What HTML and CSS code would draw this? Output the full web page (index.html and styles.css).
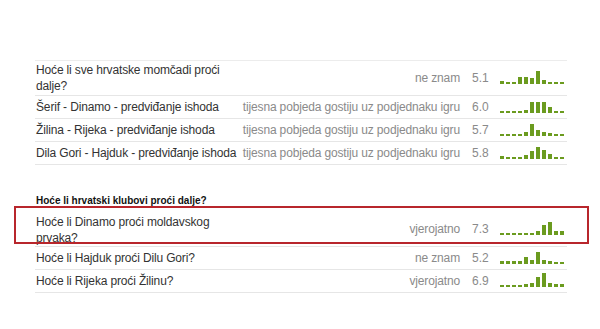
FILE: index.html
```html
<!DOCTYPE html>
<html lang="hr">
<head>
<meta charset="utf-8">
<title>Ankete</title>
<link rel="stylesheet" href="styles.css">
</head>
<body>
<div class="page">
  <div class="poll-list first">
    <div class="row">
      <div class="title">Hoće li sve hrvatske momčadi proći dalje?</div>
      <div class="desc">ne znam</div>
      <div class="score">5.1</div>
      <div class="spark"><i style="height:3px"></i><i style="height:2px"></i><i style="height:2px"></i><i style="height:7px"></i><i style="height:7px"></i><i style="height:6px"></i><i style="height:13px"></i><i style="height:4px"></i><i style="height:2px"></i><i style="height:2px"></i><i style="height:2px"></i></div>
    </div>
    <div class="row">
      <div class="title">Šerif - Dinamo - predviđanje ishoda</div>
      <div class="desc">tijesna pobjeda gostiju uz podjednaku igru</div>
      <div class="score">6.0</div>
      <div class="spark"><i style="height:2px"></i><i style="height:2px"></i><i style="height:2px"></i><i style="height:2px"></i><i style="height:3px"></i><i style="height:11px"></i><i style="height:11px"></i><i style="height:11px"></i><i style="height:6px"></i><i style="height:2px"></i><i style="height:2px"></i></div>
    </div>
    <div class="row">
      <div class="title">Žilina - Rijeka - predviđanje ishoda</div>
      <div class="desc">tijesna pobjeda gostiju uz podjednaku igru</div>
      <div class="score">5.7</div>
      <div class="spark"><i style="height:2px"></i><i style="height:2px"></i><i style="height:2px"></i><i style="height:2px"></i><i style="height:4px"></i><i style="height:12px"></i><i style="height:6px"></i><i style="height:4px"></i><i style="height:3px"></i><i style="height:2px"></i><i style="height:2px"></i></div>
    </div>
    <div class="row">
      <div class="title">Dila Gori - Hajduk - predviđanje ishoda</div>
      <div class="desc">tijesna pobjeda gostiju uz podjednaku igru</div>
      <div class="score">5.8</div>
      <div class="spark"><i style="height:3px"></i><i style="height:2px"></i><i style="height:2px"></i><i style="height:2px"></i><i style="height:4px"></i><i style="height:8px"></i><i style="height:12px"></i><i style="height:9px"></i><i style="height:5px"></i><i style="height:2px"></i><i style="height:2px"></i></div>
    </div>
  </div>

  <h3 class="group-title">Hoće li hrvatski klubovi proći dalje?</h3>

  <div class="poll-list">
    <div class="row highlighted">
      <div class="title">Hoće li Dinamo proći moldavskog prvaka?</div>
      <div class="desc">vjerojatno</div>
      <div class="score">7.3</div>
      <div class="spark"><i style="height:2px"></i><i style="height:2px"></i><i style="height:2px"></i><i style="height:2px"></i><i style="height:2px"></i><i style="height:2px"></i><i style="height:4px"></i><i style="height:10px"></i><i style="height:13px"></i><i style="height:4px"></i><i style="height:4px"></i></div>
    </div>
    <div class="row">
      <div class="title">Hoće li Hajduk proći Dilu Gori?</div>
      <div class="desc">ne znam</div>
      <div class="score">5.2</div>
      <div class="spark"><i style="height:3px"></i><i style="height:3px"></i><i style="height:3px"></i><i style="height:3px"></i><i style="height:7px"></i><i style="height:4px"></i><i style="height:12px"></i><i style="height:4px"></i><i style="height:3px"></i><i style="height:2px"></i><i style="height:2px"></i></div>
    </div>
    <div class="row">
      <div class="title">Hoće li Rijeka proći Žilinu?</div>
      <div class="desc">vjerojatno</div>
      <div class="score">6.9</div>
      <div class="spark"><i style="height:2px"></i><i style="height:2px"></i><i style="height:2px"></i><i style="height:2px"></i><i style="height:3px"></i><i style="height:4px"></i><i style="height:10px"></i><i style="height:14px"></i><i style="height:4px"></i><i style="height:3px"></i><i style="height:3px"></i></div>
    </div>
  </div>
</div>
</body>
</html>
```

FILE: styles.css
```css
html, body {
  margin: 0;
  padding: 0;
  background: #ffffff;
}

body {
  font-family: "Liberation Sans", Arial, sans-serif;
  font-size: 12px;
  color: #3a3a3a;
}

.page {
  width: 532px;
  padding: 60px 0 0 35px;
}

.poll-list.first {
  border-top: 1px solid #ececec;
}

.row {
  display: flex;
  align-items: center;
  min-height: 22px;
  border-bottom: 1px solid #e6e6e6;
  position: relative;
}

.title {
  width: 205px;
  flex: none;
  padding: 1px 0 1px 1px;
  line-height: 16px;
  letter-spacing: -0.15px;
  color: #333;
}

.highlighted .title {
  padding: 2px 0 0 1px;
}

.desc {
  flex: 1;
  text-align: right;
  color: #8a8a8a;
  letter-spacing: -0.15px;
  white-space: nowrap;
}

.score {
  width: 27px;
  flex: none;
  padding-left: 12px;
  color: #8a8a8a;
}

.spark {
  width: 67px;
  flex: none;
  height: 15px;
  margin-bottom: 4px;
  padding-left: 1px;
  display: flex;
  align-items: flex-end;
  gap: 2px;
}

.spark i {
  display: block;
  width: 4px;
  background: #6b9b1f;
}

.group-title {
  margin: 29px 0 4px 1px;
  font-size: 10px;
  line-height: 14px;
  font-weight: bold;
  color: #111;
}

.highlighted::after {
  content: "";
  position: absolute;
  top: -6px;
  bottom: 2px;
  left: -21px;
  right: -22px;
  border: 2px solid #b8262c;
  pointer-events: none;
}
```
